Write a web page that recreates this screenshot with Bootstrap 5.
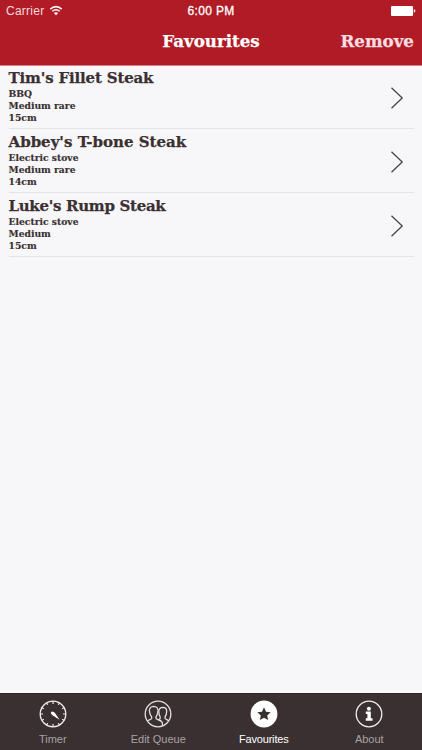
<!DOCTYPE html>
<html lang="en">
<head>
<meta charset="utf-8">
<meta name="viewport" content="width=device-width, initial-scale=1">
<title>Favourites</title>
<link href="https://cdn.jsdelivr.net/npm/bootstrap@5.3.0/dist/css/bootstrap.min.css" rel="stylesheet">
<style>
body{height:750px;background:#f7f7f9;font-family:"Liberation Sans",Arial,sans-serif;color:#3a3031;overflow:hidden}
.slab{font-family:"DejaVu Serif",serif;font-weight:700;-webkit-text-stroke:.25px currentColor}
.topbar{height:66px;background:#b01b25;border-bottom:1px solid #d9808a}
.statusbar{height:22px;font-size:12px;line-height:22px;padding:0 6px}
.statusbar>*,.titlebar>*{flex:1 1 0}
.carrier{letter-spacing:.25px;color:#f6dadd}
.clock{letter-spacing:.35px;-webkit-text-stroke:.3px #fff}
.titlebar{height:40px;font-size:16.7px;line-height:39px;padding:0 8px}
.remove{color:#fbdde0}
.fav-list{margin-top:-1px;padding:0 8.5px}
.fav-row{height:64px;border-bottom:1px solid #e4e4e8;padding-top:4px}
.fav-name{font-size:15px;line-height:19px}
.tight{letter-spacing:-.17px}
.tighter{letter-spacing:-.3px}
.fav-info{font-size:9.2px;line-height:12.2px;white-space:pre-line;-webkit-text-stroke-width:.15px}
.chev{margin:18px 10px 0 0}
.tabs{height:57px;background:#3a3031;border-top:1px solid #2c2425;font-size:11px;color:#a9a2a3}
.tabs a{color:inherit;padding-top:6px}
.tabs a.current{color:#fff}
.tabs a.current span{letter-spacing:-.18px}
.tabs span{line-height:14px;margin-top:4px}
</style>
<script src="https://cdn.jsdelivr.net/npm/bootstrap@5.3.0/dist/js/bootstrap.bundle.min.js"></script>
</head>
<body class="d-flex flex-column m-0">
<header class="topbar text-white flex-shrink-0">
  <div class="statusbar d-flex">
    <div class="d-flex align-items-center carrier"><span>Carrier</span>
      <svg class="ms-1" width="15" height="12" viewBox="-1 0 15 12" fill="none" stroke="#fff" stroke-width="1.5"><path d="M1.3 4.1Q7-.9 12.7 4.1M3.4 6.3Q7 3.2 10.6 6.3"/><path d="M7 10.3L4.9 8.1Q7 6.5 9.1 8.1Z" fill="#fff" stroke="none"/></svg>
    </div>
    <div class="text-center clock">6:00 PM</div>
    <div class="d-flex align-items-center justify-content-end"><svg width="25" height="10" viewBox="0 0 25 10" fill="#fff"><rect width="22" height="10" rx="1"/><path d="M22.8 3.3q1.6.3 1.6 1.7t-1.6 1.7z"/></svg></div>
  </div>
  <div class="titlebar slab d-flex">
    <div></div>
    <div class="text-center">Favourites</div>
    <div class="text-end remove">Remove</div>
  </div>
</header>
<main class="flex-grow-1">
 <div class="fav-list">
  <div class="fav-row d-flex align-items-start justify-content-between"><div class="slab"><div class="fav-name tight">Tim's Fillet Steak</div><div class="fav-info">BBQ
Medium rare
15cm</div></div><svg class="chev" width="14" height="22" viewBox="0 0 14 22" fill="none" stroke="#4a4243" stroke-width="1.3"><path d="M1.5 .8L12.2 11L1.5 21.2"/></svg></div>
  <div class="fav-row d-flex align-items-start justify-content-between"><div class="slab"><div class="fav-name">Abbey's T-bone Steak</div><div class="fav-info">Electric stove
Medium rare
14cm</div></div><svg class="chev" width="14" height="22" viewBox="0 0 14 22" fill="none" stroke="#4a4243" stroke-width="1.3"><path d="M1.5 .8L12.2 11L1.5 21.2"/></svg></div>
  <div class="fav-row d-flex align-items-start justify-content-between"><div class="slab"><div class="fav-name tighter">Luke's Rump Steak</div><div class="fav-info">Electric stove
Medium
15cm</div></div><svg class="chev" width="14" height="22" viewBox="0 0 14 22" fill="none" stroke="#4a4243" stroke-width="1.3"><path d="M1.5 .8L12.2 11L1.5 21.2"/></svg></div>
 </div>
</main>
<nav class="tabs row g-0 text-center flex-shrink-0">
  <a class="col d-flex flex-column align-items-center text-decoration-none" href="#">
    <svg width="28" height="28" viewBox="0 0 28 28" fill="none" stroke="#f2eeee"><circle cx="14" cy="14" r="12.8" stroke-width="1.3"/><path stroke-width="1.2" d="M14 1v3M14 24v3M1 14h3M24 14h3M7.5 2.7l1.2 2.1M20.5 2.7l-1.2 2.1M2.7 7.5l2.1 1.2M25.3 7.5l-2.1 1.2M2.7 20.5l2.1-1.2M25.3 20.5l-2.1-1.2M7.5 25.3l1.2-2.1M20.5 25.3l-1.2-2.1"/><path d="M11.8 13.1q0-1.7 1.8-1.6q2.6.6 3.7 3.5l3.3 4.8l-4.8-3.1q-3.2-1-4-3.6z" fill="#fff" stroke="none"/></svg>
    <span>Timer</span></a>
  <a class="col d-flex flex-column align-items-center text-decoration-none" href="#">
    <svg width="28" height="28" viewBox="0 0 28 28" fill="none" stroke="#e4dfdf" stroke-width="1.3"><circle cx="14" cy="14" r="12.8"/><path d="M3.4 21.3Q4 20 6.5 19.3Q8.2 18.7 7.7 17Q5.6 14.5 5.4 11Q5.2 6.5 9.7 6.4Q14.2 6.5 14 11Q13.8 14.5 12 17Q11.3 18.7 13.6 19.5Q17.3 20.5 18.3 22.5L18.6 26"/><path d="M14.8 19.6Q16.7 18.8 16.2 17Q14.8 15 14.8 11.5Q15 7.5 18.8 7.4Q22.8 7.5 22.7 11.5Q22.6 14.8 21 17Q20.6 18.8 22.3 19.4L24.8 20.7"/></svg>
    <span>Edit Queue</span></a>
  <a class="col d-flex flex-column align-items-center text-decoration-none current" href="#">
    <svg width="28" height="28" viewBox="0 0 28 28"><circle cx="14" cy="14" r="13.4" fill="#fff"/><path fill="#3a3031" d="M14 7.3l2 4.4 4.7.5-3.5 3.2 1 4.7-4.2-2.4-4.2 2.4 1-4.7-3.5-3.2 4.7-.5z"/></svg>
    <span>Favourites</span></a>
  <a class="col d-flex flex-column align-items-center text-decoration-none" href="#">
    <svg width="28" height="28" viewBox="0 0 28 28"><circle cx="14" cy="14" r="12.8" fill="none" stroke="#f2eeee" stroke-width="1.3"/><circle cx="13.9" cy="8.7" r="2" fill="#fff"/><path fill="#fff" d="M10.8 11.6h5v6.7h1.7v2.4h-6.7v-2.4h1.6v-4.4h-1.6z"/></svg>
    <span>About</span></a>
</nav>
</body>
</html>
